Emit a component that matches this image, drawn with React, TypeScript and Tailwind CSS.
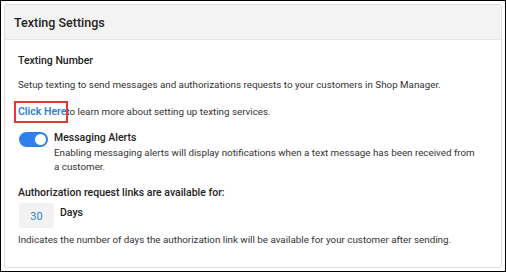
export default function App() {
  return (
    <div className="w-[506px] h-[272px] border border-black bg-white p-[3px] font-['Roboto',sans-serif] text-[#333]">
      <div className="h-full border border-[#dedede] rounded-[3px] flex flex-col overflow-hidden">
        <header className="h-[35px] shrink-0 bg-[#f3f3f3] border-b border-[#e6e6e6] px-[9px] flex items-center">
          <h1 className="text-[12.5px] font-medium text-[#222] leading-none pt-[3px]">Texting Settings</h1>
        </header>

        <div className="pl-[13px] pr-[10px] pt-[14px] text-[9.8px] leading-[14px]">
          <h2 className="font-medium text-[10.5px] text-[#222]">Texting Number</h2>
          <p className="mt-[10px]">
            Setup texting to send messages and authorizations requests to your customers in Shop Manager.
          </p>

          <p className="mt-[13px]">
            <span className="relative font-semibold text-[10.5px] text-[#2f7fd6]">
              Click Here
              <span className="absolute -left-[4px] -right-[2px] -top-[4px] -bottom-[5px] border-2 border-[#e53935]" />
            </span>
            to learn more about setting up texting services.
          </p>

          <div className="mt-[12px] flex items-start gap-[6px]">
            <div className="mt-[1px] ml-[1px] w-[29px] h-[15px] rounded-full bg-[#2f80ed] flex items-center justify-end px-[2px] shrink-0">
              <div className="w-[11px] h-[11px] rounded-full bg-white" />
            </div>
            <div>
              <div className="font-medium text-[10.5px] text-[#222]">Messaging Alerts</div>
              <p className="mt-[1px] max-w-[426px]">
                Enabling messaging alerts will display notifications when a text message has been received from a customer.
              </p>
            </div>
          </div>

          <h2 className="mt-[12px] font-medium text-[10.5px] text-[#222]">Authorization request links are available for:</h2>

          <div className="mt-[3px] flex items-center gap-[6px]">
            <div className="ml-[1px] w-[35px] h-[25px] rounded-[3px] bg-[#f2f2f2] flex items-center justify-center text-[11px] text-[#2f7fd6] pt-[3px]">
              30
            </div>
            <span className="font-medium text-[10.5px] text-[#222] -mt-[5px]">Days</span>
          </div>

          <p className="mt-[5px]">
            Indicates the number of days the authorization link will be available for your customer after sending.
          </p>
        </div>
      </div>
    </div>
  );
}
